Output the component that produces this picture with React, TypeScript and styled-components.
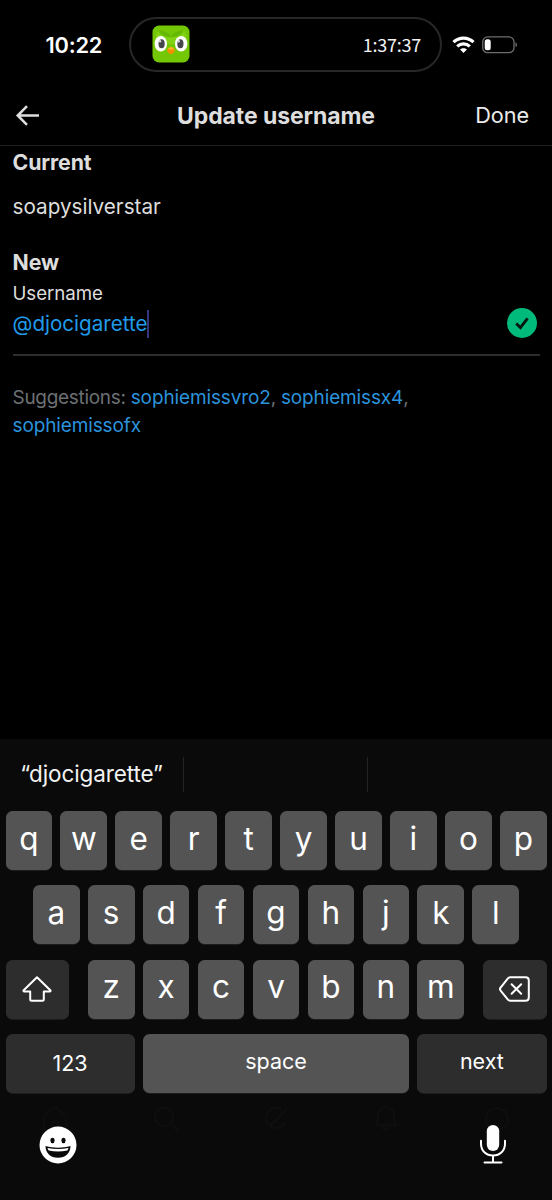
import React from "react";
import styled, { createGlobalStyle } from "styled-components";

const GlobalStyle = createGlobalStyle`
  * { box-sizing: border-box; }
  body {
    margin: 0;
    background: #000;
    font-family: Inter, "Liberation Sans", sans-serif;
  }
`;

const Screen = styled.div`
  display: flex;
  flex-direction: column;
  width: 552px;
  height: 1200px;
  overflow: hidden;
  background: #000;
  color: #dedede;
`;

const StatusBar = styled.div`
  display: flex;
  align-items: center;
  height: 86px;
  padding: 2px 34px 0 45.5px;
`;

const Clock = styled.div`
  width: 83.5px;
  padding-top: 1px;
  font-size: 21.8px;
  line-height: 26px;
  font-weight: 600;
  letter-spacing: -0.2px;
  color: #fff;
`;

const Island = styled.div`
  display: flex;
  align-items: center;
  justify-content: space-between;
  width: 313px;
  height: 55px;
  padding: 0 19px 0 21px;
  border: 2px solid #272727;
  border-radius: 28px;
`;

const Timer = styled.div`
  padding-bottom: 1px;
  font-family: "Noto Sans CJK JP", sans-serif;
  font-size: 18px;
  line-height: 26px;
  letter-spacing: -0.25px;
  color: #f4f4f4;
`;

const StatusIcons = styled.div`
  display: flex;
  align-items: center;
  gap: 7px;
  margin-left: 9.5px;
  padding-top: 1px;
`;

const NavBar = styled.header`
  display: grid;
  grid-template-columns: 120px 1fr 120px;
  align-items: center;
  height: 60px;
  padding: 0 23px 0 15px;
  border-bottom: 1px solid #1b1c1d;
`;

const NavTitle = styled.h1`
  margin: 0 -8px 0 0;
  text-align: center;
  white-space: nowrap;
  font-size: 23px;
  line-height: 28px;
  font-weight: 750;
  letter-spacing: -0.1px;
`;

const DoneButton = styled.button`
  justify-self: end;
  padding: 0 0 1px;
  border: 0;
  background: none;
  color: #ececec;
  font: 400 21.7px/28px Inter, sans-serif;
  letter-spacing: -0.1px;
`;

const Form = styled.main`
  display: flex;
  flex-direction: column;
  flex: 1;
  padding: 3px 12.5px 0;
`;

const SectionTitle = styled.h2`
  margin: 0;
  font-size: 21.3px;
  line-height: 26px;
  font-weight: 700;
  letter-spacing: -0.1px;
`;

const CurrentName = styled.p`
  margin: 18px 0 29px;
  font-size: 20.7px;
  line-height: 27px;
`;

const FieldLabel = styled.label`
  margin-top: 6px;
  font-size: 18.7px;
  line-height: 25px;
  letter-spacing: -0.05px;
`;

const Field = styled.div`
  display: flex;
  align-items: center;
  justify-content: space-between;
  height: 50px;
  padding: 0 3px 14px 0;
  border-bottom: 2px solid #2b2d2f;
`;

const FieldValue = styled.div`
  display: flex;
  align-items: center;
  padding-top: 1px;
  font-size: 20.6px;
  line-height: 28px;
  color: #1f9bea;
`;

const Caret = styled.span`
  width: 2px;
  height: 28px;
  background: #34357f;
`;

const Suggestions = styled.p`
  margin: 28px 0 0;
  width: 440px;
  font-size: 19px;
  line-height: 27.5px;
  letter-spacing: -0.3px;
  color: #6c7074;
`;

const Suggestion = styled.span`
  letter-spacing: -0.13px;
  color: #2b93dc;
`;

const Keyboard = styled.section`
  display: flex;
  flex-direction: column;
  height: 461.5px;
  background: #0a0a0a;
`;

const Predictions = styled.div`
  display: grid;
  grid-template-columns: repeat(3, 184px);
  align-items: center;
  height: 35px;
  margin: 18px 0 19.5px;
`;

const Prediction = styled.div<{ $last?: boolean }>`
  height: 35px;
  border-right: ${(p) => (p.$last ? "0" : "1px solid #242424")};
  text-align: center;
  font-size: 22.5px;
  line-height: 34.5px;
  letter-spacing: -0.1px;
  color: #f2f2f2;
`;

const KeyRow = styled.div`
  display: flex;
  justify-content: space-between;
  margin: 0 5.5px 15.3px;
`;

const KeyGroup = styled.div`
  display: flex;
  justify-content: center;
  gap: 8.25px;
  flex: 1;
`;

const Key = styled.div<{ $width?: number; $dark?: boolean; $small?: boolean; $drop?: number }>`
  display: flex;
  align-items: center;
  justify-content: center;
  width: ${(p) => p.$width ?? 46.7}px;
  height: 59px;
  padding-bottom: ${(p) => (p.$drop ?? (p.$small ? 4 : 3.5))}px;
  border-radius: 6.5px;
  background: ${(p) => (p.$dark ? "#2d2d2d" : "#545454")};
  box-shadow: 0 0.7px 0 #252525;
  color: #fff;
  font-size: ${(p) => (p.$small ? 21.5 : 31.5)}px;
  line-height: 40px;
  font-weight: ${(p) => (p.$small ? 400 : 380)};
`;

const Dock = styled.div`
  display: flex;
  flex-direction: column;
  flex: 1;
`;

const TabGhosts = styled.div`
  display: flex;
  justify-content: space-around;
  height: 28px;
  margin-top: -3px;
  opacity: 0.014;
`;

const DockButtons = styled.div`
  display: flex;
  justify-content: space-between;
  align-items: center;
  height: 42px;
  margin-top: -9px;
  padding: 0 45px 0 39px;
`;

const OwlIcon = () => (
  <svg width="38" height="38" viewBox="0 0 38 38">
    <rect x="0.5" y="0.5" width="37" height="37" rx="6.5" fill="#73c705" />
    <path d="M6 6c2 5 6 6.500 13 6.500S30 11 32 6c3 4 3 9 1 13H5C3 15 3 10 6 6z" fill="#82d315" />
    <path d="M7 5c4 1 9 2 12 6 3-4 8-5 12-6-1 4-6 7-12 7S8 9 7 5z" fill="#65b800" />
    <ellipse cx="8.800" cy="18.800" rx="6.200" ry="7.700" fill="#fff" />
    <ellipse cx="29.200" cy="18.800" rx="6.200" ry="7.700" fill="#fff" />
    <ellipse cx="9.600" cy="18.800" rx="3.100" ry="4.500" fill="#45474d" />
    <ellipse cx="28.400" cy="18.800" rx="3.100" ry="4.500" fill="#45474d" />
    <circle cx="8" cy="16.200" r="1.200" fill="#ddd" />
    <circle cx="26.700" cy="16.200" r="1.200" fill="#ddd" />
    <path d="M15 25c1-2 2.500-2.500 4-2.500s3 .5 4 2.500c-1 3-2.500 4-4 4S16 28 15 25z" fill="#f49000" />
    <path d="M16 24c1-1.400 2-1.700 3-1.700s2 .3 3 1.700c-2 1-4 1-6 0z" fill="#ffb52b" />
  </svg>
);

const WifiIcon = () => (
  <svg width="23" height="17" viewBox="0 0 23 17" fill="none" stroke="#fff" strokeWidth="3.200">
    <path d="M1.500 6.200C7.200.7 15.800.7 21.500 6.200" />
    <path d="M5.200 10.400c3.600-3.500 9-3.500 12.600 0" />
    <path d="M11.500 17 8.100 13.600c1.800-1.800 5-1.800 6.800 0z" fill="#fff" stroke="none" />
  </svg>
);

const BatteryIcon = () => (
  <svg width="36" height="18" viewBox="0 0 36 18">
    <rect x="0.700" y="0.900" width="31.300" height="15.800" rx="5" fill="none" stroke="#6d6d6d" strokeWidth="1.300" />
    <rect x="2.700" y="3.300" width="6" height="11" rx="2.500" fill="#fff" />
    <path d="M33.500 6.300c2 .8 2 4.200 0 5z" fill="#6d6d6d" />
  </svg>
);

const BackArrow = () => (
  <svg width="25" height="22" viewBox="0 0 25 22" fill="none" stroke="#dedede" strokeWidth="2.500">
    <path d="M12 1.200 2.700 10.500l9.300 9.300M2.700 10.500H24" />
  </svg>
);

const CheckBadge = () => (
  <svg width="30" height="30" viewBox="0 0 30 30">
    <circle cx="15" cy="15" r="15" fill="#00ba7c" />
    <path d="m9.200 15.600 4.200 4 7.200-9.200" fill="none" stroke="#06150f" strokeWidth="2.800" />
  </svg>
);

const ShiftIcon = () => (
  <svg width="30" height="26" viewBox="0 0 30 26" fill="none" stroke="#fff" strokeWidth="2" strokeLinejoin="round">
    <path d="M15 1.300 28.300 14.200c.5.600.2 1.300-.6 1.300H21.800v7.700c0 1-.5 1.500-1.500 1.500H9.700c-1 0-1.500-.5-1.500-1.500v-7.700H2.300c-.8 0-1.100-.7-.6-1.300z" />
  </svg>
);

const DeleteIcon = () => (
  <svg width="31" height="26" viewBox="0 0 31 26" fill="none" stroke="#fff" strokeWidth="2" strokeLinecap="round" strokeLinejoin="round">
    <path d="M11.300 1.200H26.500c2 0 3.300 1.200 3.300 3.200v17c0 2-1.300 3.300-3.300 3.300H11.300c-1 0-1.700-.4-2.400-1.100L1.800 14.800c-1.200-1.300-1.200-2.200 0-3.500l7.100-9c.7-.8 1.400-1.100 2.400-1.100z" />
    <path d="m12.600 8.200 9.600 9.600m0-9.600-9.600 9.600" />
  </svg>
);

const EmojiIcon = () => (
  <svg width="38" height="38" viewBox="0 0 38 38">
    <circle cx="19" cy="19" r="18.500" fill="#fff" />
    <ellipse cx="13.500" cy="14.500" rx="2.100" ry="2.700" fill="#0a0a0a" />
    <ellipse cx="24.500" cy="14.500" rx="2.100" ry="2.700" fill="#0a0a0a" />
    <path d="M6.500 20c8 2.200 17 2.200 25 0 0 7-5 11.800-12.500 11.800S6.500 27 6.500 20z" fill="#0a0a0a" />
    <path d="M8.500 21.900c7 1.500 14 1.500 21 0-.3 1.300-.8 2.100-1.300 2.600-6 1.300-12.400 1.300-18.400 0-.6-.6-1-1.400-1.300-2.600z" fill="#fff" />
  </svg>
);

const MicIcon = () => (
  <svg width="28" height="40" viewBox="0 0 28 40" fill="none" stroke="#fff" strokeWidth="2" strokeLinecap="round">
    <rect x="7.800" y="0" width="12.400" height="26" rx="6.200" fill="#fff" stroke="none" />
    <path d="M2 15.800v3C2 25.800 7 30.500 14 30.500s12-4.700 12-11.700v-3M14 30.500v7M5.500 37.500h17" />
  </svg>
);

const ghostPaths = [
  "M3 11 14 2l11 9v14H3zM11 25v-8h6v8",
  "M12 3a9 9 0 1 0 0 18 9 9 0 0 0 0-18zM19 19l7 7",
  "M20 5a10 10 0 1 0 3 12M8 21 25 4",
  "M4 20h20l-2-5v-5a8 8 0 0 0-16 0v5zM10 21c1 5 7 5 8 0",
  "M14 3a11 11 0 1 0 0 22 11 11 0 0 0 0-22z",
];

const letters = (row: string, drop?: number) =>
  [...row].map((c) => (
    <Key key={c} $drop={drop}>
      {c}
    </Key>
  ));

export default function App() {
  return (
    <Screen>
      <GlobalStyle />
      <StatusBar>
        <Clock>10:22</Clock>
        <Island>
          <OwlIcon />
          <Timer>1:37:37</Timer>
        </Island>
        <StatusIcons>
          <WifiIcon />
          <BatteryIcon />
        </StatusIcons>
      </StatusBar>
      <NavBar>
        <BackArrow />
        <NavTitle>Update username</NavTitle>
        <DoneButton>Done</DoneButton>
      </NavBar>
      <Form>
        <SectionTitle>Current</SectionTitle>
        <CurrentName>soapysilverstar</CurrentName>
        <SectionTitle>New</SectionTitle>
        <FieldLabel>Username</FieldLabel>
        <Field>
          <FieldValue>
            @djocigarette
            <Caret />
          </FieldValue>
          <CheckBadge />
        </Field>
        <Suggestions>
          Suggestions: <Suggestion>sophiemissvro2</Suggestion>, <Suggestion>sophiemissx4</Suggestion>,{" "}
          <Suggestion>sophiemissofx</Suggestion>
        </Suggestions>
      </Form>
      <Keyboard>
        <Predictions>
          <Prediction>“djocigarette”</Prediction>
          <Prediction />
          <Prediction $last />
        </Predictions>
        <KeyRow>
          <KeyGroup>{letters("qwertyuiop")}</KeyGroup>
        </KeyRow>
        <KeyRow>
          <KeyGroup>{letters("asdfghjkl")}</KeyGroup>
        </KeyRow>
        <KeyRow>
          <Key $dark $width={63.3} $drop={0}>
            <ShiftIcon />
          </Key>
          <KeyGroup>{letters("zxcvbnm", 4)}</KeyGroup>
          <Key $dark $width={63.3} $drop={0}>
            <DeleteIcon />
          </Key>
        </KeyRow>
        <KeyRow>
          <Key $dark $small $width={129.2} $drop={0}>
            123
          </Key>
          <Key $small $width={266.2}>
            space
          </Key>
          <Key $dark $small $width={129.2}>
            next
          </Key>
        </KeyRow>
        <Dock>
          <TabGhosts>
            {ghostPaths.map((d) => (
              <svg key={d} width="28" height="28" viewBox="0 0 28 28" fill="none" stroke="#fff" strokeWidth="2">
                <path d={d} />
              </svg>
            ))}
          </TabGhosts>
          <DockButtons>
            <EmojiIcon />
            <MicIcon />
          </DockButtons>
        </Dock>
      </Keyboard>
    </Screen>
  );
}
